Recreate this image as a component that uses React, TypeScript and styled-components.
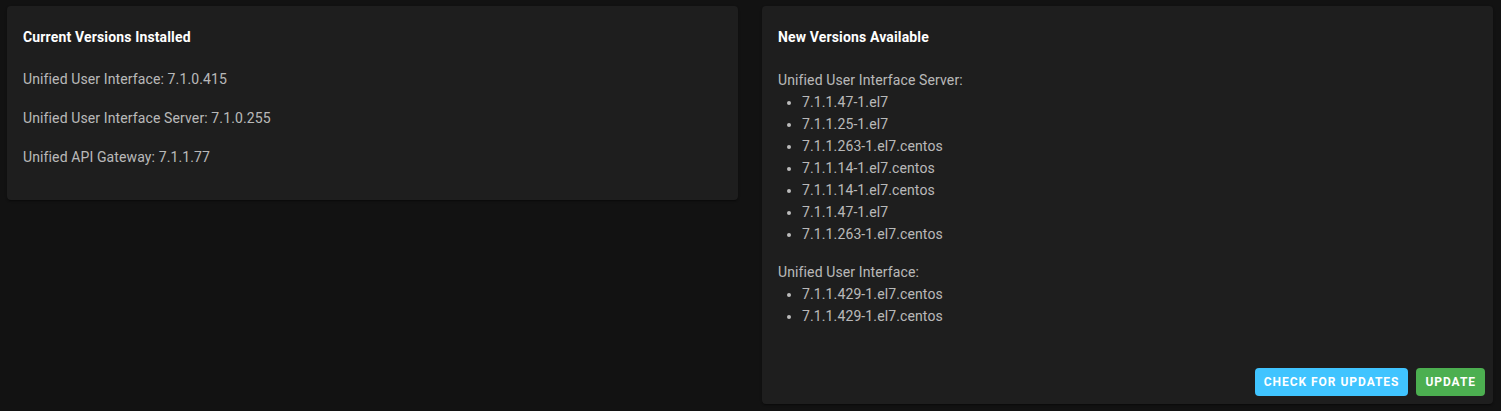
import styled, { createGlobalStyle } from "styled-components";

const installed = [
  "Unified User Interface: 7.1.0.415",
  "Unified User Interface Server: 7.1.0.255",
  "Unified API Gateway: 7.1.1.77",
];

const available = [
  {
    name: "Unified User Interface Server:",
    versions: [
      "7.1.1.47-1.el7",
      "7.1.1.25-1.el7",
      "7.1.1.263-1.el7.centos",
      "7.1.1.14-1.el7.centos",
      "7.1.1.14-1.el7.centos",
      "7.1.1.47-1.el7",
      "7.1.1.263-1.el7.centos",
    ],
  },
  {
    name: "Unified User Interface:",
    versions: ["7.1.1.429-1.el7.centos", "7.1.1.429-1.el7.centos"],
  },
];

function App() {
  return (
    <>
      <GlobalStyle />
      <Page>
        <Card>
          <Title>Current Versions Installed</Title>
          <Content $top={16} $bottom={15}>
            {installed.map((line) => (
              <Line key={line}>{line}</Line>
            ))}
          </Content>
        </Card>
        <Card>
          <Title>New Versions Available</Title>
          <Content $top={17} $bottom={33}>
            {available.map((group) => (
              <div key={group.name}>
                <GroupName>{group.name}</GroupName>
                <VersionList>
                  {group.versions.map((v, i) => (
                    <li key={i}>{v}</li>
                  ))}
                </VersionList>
              </div>
            ))}
          </Content>
          <Actions>
            <Button $color="#40c4ff">Check for updates</Button>
            <Button $color="#4caf50">Update</Button>
          </Actions>
        </Card>
      </Page>
    </>
  );
}

const GlobalStyle = createGlobalStyle`
  html, body {
    margin: 0;
    background: #121212;
    font-family: Roboto, "Liberation Sans", sans-serif;
  }
`;

const Page = styled.div`
  display: grid;
  grid-template-columns: 1fr 1fr;
  gap: 24px;
  align-items: start;
  padding: 6px 8px 0 7px;
  min-height: 411px;
  box-sizing: border-box;
`;

const Card = styled.div`
  background: #1e1e1e;
  border-radius: 4px;
  box-shadow: 0 2px 1px -1px rgba(0, 0, 0, 0.2), 0 1px 1px rgba(0, 0, 0, 0.14),
    0 1px 3px rgba(0, 0, 0, 0.12);
`;

const Title = styled.div`
  padding: 16px 16px 0;
  font-size: 14px;
  font-weight: 700;
  line-height: 30px;
  letter-spacing: 0.15px;
  color: #ffffff;
`;

const Content = styled.div<{ $top: number; $bottom: number }>`
  padding: ${({ $top }) => $top}px 16px ${({ $bottom }) => $bottom}px;
  font-size: 14px;
  letter-spacing: 0.12px;
  color: rgba(255, 255, 255, 0.7);

  & > div:last-child ul {
    margin-bottom: 0;
  }
`;

const Line = styled.p`
  margin: 0 0 16px;
  line-height: 23px;
`;

const GroupName = styled.p`
  margin: 0;
  line-height: 22px;
`;

const VersionList = styled.ul`
  margin: 0 0 16px;
  padding-left: 24px;
  line-height: 22px;
`;

const Actions = styled.div`
  display: flex;
  justify-content: flex-end;
  gap: 8px;
  padding: 8px;
`;

const Button = styled.button<{ $color: string }>`
  height: 28px;
  padding: 0 9px;
  border: none;
  border-radius: 4px;
  background: ${({ $color }) => $color};
  color: #ffffff;
  font-family: Roboto, "Liberation Sans", sans-serif;
  font-size: 12px;
  font-weight: 700;
  letter-spacing: 0.08em;
  text-transform: uppercase;
  cursor: pointer;
`;

export default App;
